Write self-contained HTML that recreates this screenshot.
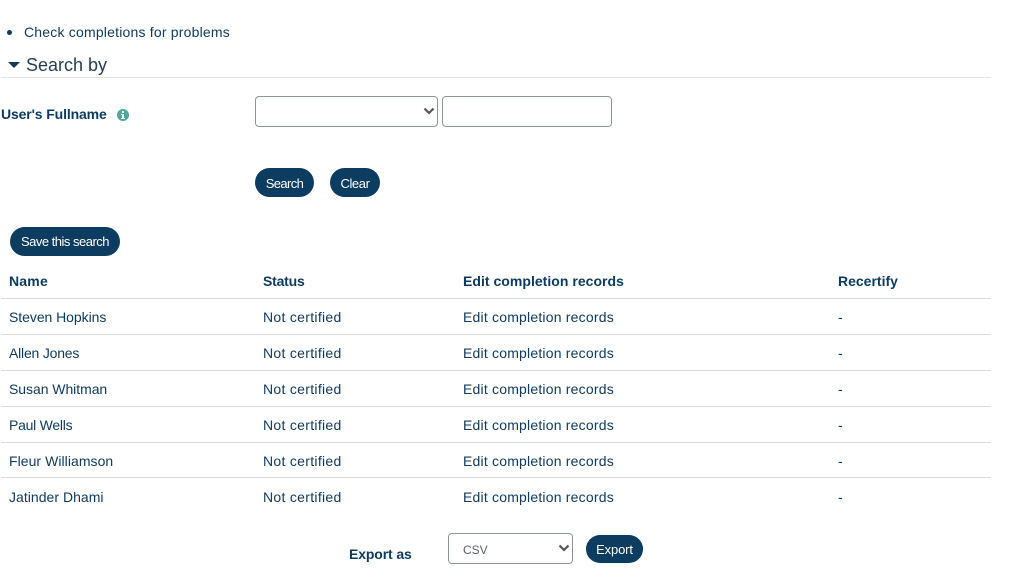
<!DOCTYPE html>
<html><head><meta charset="utf-8"><style>
html,body{margin:0;padding:0;background:#fff;width:1017px;height:572px;overflow:hidden}
body{position:relative;font-family:"Liberation Sans",sans-serif;font-size:14px;color:#0f3a5c}
.t{position:absolute;white-space:nowrap;line-height:18px;letter-spacing:.2px}
.b{font-weight:700;color:#0d3a5e}
.l{position:absolute;left:1px;width:990px;height:1px;background:#dcdcdc}
.btn{position:absolute;background:#0c3c60;color:#fff;border-radius:15px;text-align:center;font-size:13px;white-space:nowrap}
.f{position:absolute;box-sizing:border-box;border:1px solid #8f959e;border-radius:4px;background:#fff}
.n{letter-spacing:.3px}
svg{position:absolute}
</style></head><body>
<div style="position:absolute;left:7px;top:30px;width:5px;height:5px;border-radius:50%;background:#0f3a5c"></div>
<div class="t" style="left:24px;top:23px;letter-spacing:.2px">Check completions for problems</div>
<svg style="left:8px;top:62px" width="12" height="6"><path d="M0 0H12L6 6Z" fill="#0f3a5c"/></svg>
<div class="t" style="left:26px;top:54px;font-size:18px;line-height:22px;color:#263f52;letter-spacing:0">Search by</div>
<div class="l" style="top:77px;background:#e3e3e3"></div>
<div class="t b" style="left:1px;top:105px;letter-spacing:-.13px">User's Fullname</div>
<svg style="left:117px;top:109px" width="12" height="12"><circle cx="6" cy="6" r="6" fill="#4fa99a"/><rect x="5" y="2" width="2" height="2" fill="#fff"/><path d="M4 5H7V9H8V10H4V9H5V6H4Z" fill="#fff"/></svg>
<div class="f" style="left:255px;top:96px;width:183px;height:31px"></div>
<svg style="left:423px;top:107px" width="12" height="8"><path d="M1.5 1.5L6 6L10.5 1.5" fill="none" stroke="#555" stroke-width="2.2"/></svg>
<div class="f" style="left:442px;top:96px;width:170px;height:31px"></div>
<div class="btn" style="left:255px;top:168px;width:59px;height:29px;line-height:31px;letter-spacing:-.6px">Search</div>
<div class="btn" style="left:330px;top:168px;width:50px;height:29px;line-height:31px;letter-spacing:-.4px">Clear</div>
<div class="btn" style="left:10px;top:227px;width:110px;height:29px;line-height:29px;letter-spacing:-.5px">Save this search</div>
<div class="t b" style="left:9px;top:272px">Name</div>
<div class="t b" style="left:263px;top:272px;letter-spacing:-.2px">Status</div>
<div class="t b" style="left:463px;top:272px;letter-spacing:.03px">Edit completion records</div>
<div class="t b" style="left:838px;top:272px;letter-spacing:0">Recertify</div>
<div class="l" style="top:298px"></div>
<div class="t" style="left:9px;top:308px;letter-spacing:-.05px">Steven Hopkins</div><div class="t n" style="left:263px;top:308px">Not certified</div><div class="t" style="left:463px;top:308px">Edit completion records</div><div class="t" style="left:838px;top:308px">-</div>
<div class="l" style="top:334px"></div>
<div class="t" style="left:9px;top:344px;letter-spacing:-.2px">Allen Jones</div><div class="t n" style="left:263px;top:344px">Not certified</div><div class="t" style="left:463px;top:344px">Edit completion records</div><div class="t" style="left:838px;top:344px">-</div>
<div class="l" style="top:370px"></div>
<div class="t" style="left:9px;top:380px;letter-spacing:-.05px">Susan Whitman</div><div class="t n" style="left:263px;top:380px">Not certified</div><div class="t" style="left:463px;top:380px">Edit completion records</div><div class="t" style="left:838px;top:380px">-</div>
<div class="l" style="top:406px"></div>
<div class="t" style="left:9px;top:416px;letter-spacing:-.25px">Paul Wells</div><div class="t n" style="left:263px;top:416px">Not certified</div><div class="t" style="left:463px;top:416px">Edit completion records</div><div class="t" style="left:838px;top:416px">-</div>
<div class="l" style="top:442px"></div>
<div class="t" style="left:9px;top:452px;letter-spacing:.05px">Fleur Williamson</div><div class="t n" style="left:263px;top:452px">Not certified</div><div class="t" style="left:463px;top:452px">Edit completion records</div><div class="t" style="left:838px;top:452px">-</div>
<div class="l" style="top:477px"></div>
<div class="t" style="left:9px;top:488px;letter-spacing:.03px">Jatinder Dhami</div><div class="t n" style="left:263px;top:488px">Not certified</div><div class="t" style="left:463px;top:488px">Edit completion records</div><div class="t" style="left:838px;top:488px">-</div>
<div class="t b" style="left:349px;top:545px;letter-spacing:-.13px">Export as</div>
<div class="f" style="left:448px;top:533px;width:125px;height:31px"></div>
<div class="t" style="left:463px;top:541px;font-size:12px;color:#5a6268;letter-spacing:0">CSV</div>
<svg style="left:558px;top:544px" width="12" height="8"><path d="M1.5 1.5L6 6L10.5 1.5" fill="none" stroke="#555" stroke-width="2.2"/></svg>
<div class="btn" style="left:586px;top:535px;width:57px;height:28px;line-height:29px;letter-spacing:-.15px">Export</div>
</body></html>
